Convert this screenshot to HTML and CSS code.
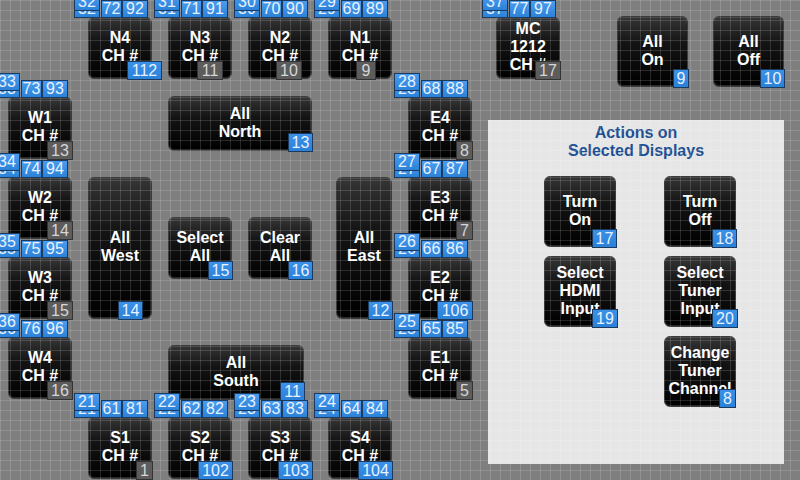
FILE: index.html
```html
<!DOCTYPE html>
<html>
<head>
<meta charset="utf-8">
<link rel="stylesheet" href="styles.css">
</head>
<body>
<div class="canvas">

  <div class="panel">
    <div class="panel-title">Actions on<br>Selected Displays</div>
    <div class="panel-grid">
      <div class="pbtn"><div class="btn">Turn<br>On</div><span class="num pn">17</span></div>
      <div class="pbtn"><div class="btn">Turn<br>Off</div><span class="num pn">18</span></div>
      <div class="pbtn"><div class="btn">Select<br>HDMI<br>Input</div><span class="num pn w26">19</span></div>
      <div class="pbtn"><div class="btn">Select<br>Tuner<br>Input</div><span class="num pn w26">20</span></div>
      <div class="pbtn empty"></div>
      <div class="pbtn"><div class="btn">Change<br>Tuner<br>Channel</div><span class="num pn w17">8</span></div>
    </div>
  </div>

  <!-- North row -->
  <div class="disp n4"><div class="btn">N4<br>CH #</div>
    <span class="tag s">32</span><span class="tag s f">32</span><span class="tag a">72</span><span class="tag b">92</span>
    <span class="num c112">112</span></div>
  <div class="disp n3"><div class="btn">N3<br>CH #</div>
    <span class="tag s">31</span><span class="tag s f">31</span><span class="tag a">71</span><span class="tag b">91</span>
    <span class="num gray c11">11</span></div>
  <div class="disp n2"><div class="btn">N2<br>CH #</div>
    <span class="tag s">30</span><span class="tag s f">30</span><span class="tag a">70</span><span class="tag b">90</span>
    <span class="num gray c10">10</span></div>
  <div class="disp n1"><div class="btn">N1<br>CH #</div>
    <span class="tag s">29</span><span class="tag s f">29</span><span class="tag a">69</span><span class="tag b">89</span>
    <span class="num gray c9">9</span></div>

  <!-- MC -->
  <div class="disp mc"><div class="btn">MC<br>1212<br>CH #</div>
    <span class="tag s">37</span><span class="tag s f">37</span><span class="tag a">77</span><span class="tag b">97</span>
    <span class="num gray rr w26">17</span></div>

  <!-- West column -->
  <div class="disp w1"><div class="btn">W1<br>CH #</div>
    <span class="tag s">33</span><span class="tag s f">33</span><span class="tag a">73</span><span class="tag b">93</span>
    <span class="num gray rr w26">13</span></div>
  <div class="disp w2"><div class="btn">W2<br>CH #</div>
    <span class="tag s">34</span><span class="tag s f">34</span><span class="tag a">74</span><span class="tag b">94</span>
    <span class="num gray rr w26">14</span></div>
  <div class="disp w3"><div class="btn">W3<br>CH #</div>
    <span class="tag s">35</span><span class="tag s f">35</span><span class="tag a">75</span><span class="tag b">95</span>
    <span class="num gray rr w26">15</span></div>
  <div class="disp w4"><div class="btn">W4<br>CH #</div>
    <span class="tag s">36</span><span class="tag s f">36</span><span class="tag a">76</span><span class="tag b">96</span>
    <span class="num gray rr w26">16</span></div>

  <!-- East column -->
  <div class="disp e4"><div class="btn">E4<br>CH #</div>
    <span class="tag s">28</span><span class="tag s f">28</span><span class="tag a">68</span><span class="tag b">88</span>
    <span class="num gray rr w17">8</span></div>
  <div class="disp e3"><div class="btn">E3<br>CH #</div>
    <span class="tag s">27</span><span class="tag s f">27</span><span class="tag a">67</span><span class="tag b">87</span>
    <span class="num gray rr w17">7</span></div>
  <div class="disp e2"><div class="btn">E2<br>CH #</div>
    <span class="tag s">26</span><span class="tag s f">26</span><span class="tag a">66</span><span class="tag b">86</span>
    <span class="num rr w36">106</span></div>
  <div class="disp e1"><div class="btn">E1<br>CH #</div>
    <span class="tag s">25</span><span class="tag s f">25</span><span class="tag a">65</span><span class="tag b">85</span>
    <span class="num gray rr w17">5</span></div>

  <!-- South row -->
  <div class="disp s1"><div class="btn">S1<br>CH #</div>
    <span class="tag s">21</span><span class="tag s f">21</span><span class="tag a">61</span><span class="tag b">81</span>
    <span class="num gray rr w17">1</span></div>
  <div class="disp s2"><div class="btn">S2<br>CH #</div>
    <span class="tag s">22</span><span class="tag s f">22</span><span class="tag a">62</span><span class="tag b">82</span>
    <span class="num rr w35">102</span></div>
  <div class="disp s3"><div class="btn">S3<br>CH #</div>
    <span class="tag s">23</span><span class="tag s f">23</span><span class="tag a">63</span><span class="tag b">83</span>
    <span class="num rr w35">103</span></div>
  <div class="disp s4"><div class="btn">S4<br>CH #</div>
    <span class="tag s">24</span><span class="tag s f">24</span><span class="tag a">64</span><span class="tag b">84</span>
    <span class="num rr w35">104</span></div>

  <!-- Group buttons -->
  <div class="disp allnorth"><div class="btn">All<br>North</div><span class="num rr w25">13</span></div>
  <div class="disp allwest"><div class="btn">All<br>West</div><span class="num w25 cw">14</span></div>
  <div class="disp selall"><div class="btn">Select<br>All</div><span class="num rr w25">15</span></div>
  <div class="disp clrall"><div class="btn">Clear<br>All</div><span class="num rr w25">16</span></div>
  <div class="disp alleast"><div class="btn">All<br>East</div><span class="num rr w25">12</span></div>
  <div class="disp allsouth"><div class="btn">All<br>South</div><span class="num rr w25">11</span></div>
  <div class="disp allon"><div class="btn">All<br>On</div><span class="num rr w16">9</span></div>
  <div class="disp alloff"><div class="btn">All<br>Off</div><span class="num rr w25">10</span></div>

  <div class="grid"></div>
</div>
</body>
</html>
```

FILE: styles.css
```css
html, body {
  margin: 0;
  padding: 0;
  background: #808080;
}

.canvas {
  position: relative;
  width: 800px;
  height: 480px;
  overflow: hidden;
  background: #7f7f7f;
  font-family: "Liberation Sans", Arial, sans-serif;
}

.grid {
  position: absolute;
  inset: 0;
  pointer-events: none;
  z-index: 5;
  background-image:
    linear-gradient(to right, rgba(255, 255, 255, 0.14) 1px, transparent 1px),
    linear-gradient(to bottom, rgba(255, 255, 255, 0.14) 1px, transparent 1px);
  background-size: 10px 10px;
}

/* ---------- buttons ---------- */
.btn {
  box-sizing: border-box;
  width: 100%;
  height: 100%;
  padding-bottom: 2px;
  border: 1px solid #3c3c3c;
  border-radius: 6px;
  background: linear-gradient(#353535 0%, #141414 38%, #000 100%);
  box-shadow: inset 0 1px 0 rgba(255, 255, 255, 0.12), inset 0 -1px 0 rgba(255, 255, 255, 0.16);
  color: #fff;
  font-weight: bold;
  font-size: 16px;
  line-height: 18px;
  display: flex;
  align-items: center;
  justify-content: center;
  text-align: center;
}

.disp {
  position: absolute;
  width: 64px;
  height: 62px;
}

/* ---------- number badges ---------- */
.num {
  position: absolute;
  z-index: 10;
  box-sizing: border-box;
  height: 19px;
  bottom: -1px;
  border: 1px solid #1b3a5e;
  background: linear-gradient(#3b90e8, #2b80d8);
  color: #e8f2ff;
  font-size: 16px;
  line-height: 17px;
  text-align: center;
  font-weight: normal;
}
.num.gray {
  background: #5c5c5c;
  border-color: #333;
  color: #d6d6d6;
}
.rr { right: -1px; }
.w16 { width: 16px; }
.w17 { width: 17px; }
.w25 { width: 25px; }
.w26 { width: 26px; }
.w35 { width: 35px; }
.w36 { width: 36px; }

.c112 { width: 35px; right: -10px; }
.c11 { width: 26px; right: 9px; }
.c10 { width: 26px; right: 10px; }
.c9 { width: 20px; right: 16px; }
.cw { left: 30px; }

/* ---------- label tags ---------- */
.tag {
  position: absolute;
  z-index: 10;
  top: -17px;
  box-sizing: border-box;
  height: 18px;
  border: 1px solid #1b3a5e;
  background: linear-gradient(#4a9cf0, #2c82d8);
  color: #e8f2ff;
  font-size: 16px;
  line-height: 16px;
  text-align: center;
}
.tag.a { left: 13px; width: 21px; }
.tag.b { left: 34px; width: 26px; }
.tag.s { left: -14px; width: 26px; }
.tag.s.f { top: -24px; z-index: 11; }

/* ---------- canvas placement ---------- */
.n4 { left: 88px; top: 17px; }
.n3 { left: 168px; top: 17px; }
.n2 { left: 248px; top: 17px; }
.n1 { left: 328px; top: 17px; }
.mc { left: 496px; top: 17px; }

.w1 { left: 8px; top: 97px; }
.w2 { left: 8px; top: 177px; }
.w3 { left: 8px; top: 257px; }
.w4 { left: 8px; top: 337px; }

.e4 { left: 408px; top: 97px; }
.e3 { left: 408px; top: 177px; }
.e2 { left: 408px; top: 257px; }
.e1 { left: 408px; top: 337px; }

.s1 { left: 88px; top: 417px; }
.s2 { left: 168px; top: 417px; }
.s3 { left: 248px; top: 417px; }
.s4 { left: 328px; top: 417px; }

.allnorth { left: 168px; top: 96px; width: 144px; height: 55px; }
.allwest { left: 88px; top: 177px; height: 142px; }
.selall { left: 168px; top: 217px; }
.clrall { left: 248px; top: 217px; }
.alleast { left: 336px; top: 177px; width: 56px; height: 142px; }
.allsouth { left: 168px; top: 345px; width: 136px; height: 55px; }
.allon { left: 617px; top: 16px; width: 71px; height: 71px; }
.alloff { left: 713px; top: 16px; width: 71px; height: 71px; }

/* ---------- actions panel ---------- */
.panel {
  position: absolute;
  left: 488px;
  top: 120px;
  width: 296px;
  height: 344px;
  background: #e6e6e6;
  box-sizing: border-box;
  padding-top: 4px;
}
.panel-title {
  color: #1c4f91;
  font-weight: bold;
  font-size: 16px;
  line-height: 18px;
  text-align: center;
}
.panel-grid {
  display: grid;
  grid-template-columns: 72px 72px;
  grid-auto-rows: 71px;
  column-gap: 48px;
  row-gap: 9px;
  margin-top: 16px;
  padding-left: 56px;
}
.pbtn {
  position: relative;
}
.pn { right: -1px; width: 25px; }
.pn.w26 { width: 26px; right: -2px; }
.pn.w17 { width: 17px; right: 0; }
```
